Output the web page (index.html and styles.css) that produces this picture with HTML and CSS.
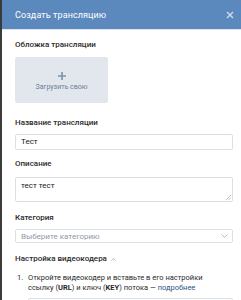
FILE: index.html
```html
<!DOCTYPE html>
<html lang="ru">
<head>
<meta charset="utf-8">
<link rel="stylesheet" href="styles.css">
</head>
<body>
<div class="dialog">
  <div class="header">
    <span class="title">Создать трансляцию</span>
    <svg class="close" width="8" height="8" viewBox="0 0 8 8"><path d="M1 1L7 7M7 1L1 7" stroke="#cfdcec" stroke-width="1.4"/></svg>
  </div>
  <div class="body">
    <div class="label first">Обложка трансляции</div>
    <div class="cover">
      <svg width="8" height="8" viewBox="0 0 8 8"><path d="M4 0V8M0 4H8" stroke="#7e92ab" stroke-width="1.6"/></svg>
      <span>Загрузить свою</span>
    </div>
    <div class="label l2">Название трансляции</div>
    <div class="input">Тест</div>
    <div class="label l3">Описание</div>
    <div class="textarea">тест тест
      <svg class="grip" width="5" height="5" viewBox="0 0 5 5"><path d="M5 0L0 5M5 2.5L2.5 5" stroke="#aab" stroke-width="0.7"/></svg>
    </div>
    <div class="label l4">Категория</div>
    <div class="select"><span>Выберите категорию</span>
      <svg width="7" height="4" viewBox="0 0 7 4"><path d="M0.5 0.5L3.5 3.3L6.5 0.5" fill="none" stroke="#a6b3c2" stroke-width="0.9"/></svg>
    </div>
    <div class="label l5">Настройка видеокодера <svg width="5" height="3" viewBox="0 0 5 3"><path d="M0.5 2.6L2.5 0.6L4.5 2.6" fill="none" stroke="#8fb0d6" stroke-width="0.9"/></svg></div>
    <div class="step">
      <span class="num">1.</span>
      <div class="text">Откройте видеокодер и вставьте в его настройки<br>ссылку (<b>URL</b>) и ключ (<b>KEY</b>) потока — <a>подробнее</a></div>
    </div>
    <div class="urlbox"></div>
  </div>
</div>
</body>
</html>
```
FILE: styles.css
```css
html, body {
  margin: 0;
  padding: 0;
  background: #3b3b3b;
  overflow: hidden;
}
body {
  font-family: Roboto, "Open Sans", sans-serif;
  width: 241px;
  height: 300px;
}
.dialog {
  margin-left: 2px;
  background: #fff;
  height: 300px;
  overflow: hidden;
}
.header {
  height: 29px;
  background: #5b88bd;
  border-bottom: 1px solid #dce5f0;
  display: flex;
  align-items: center;
  justify-content: space-between;
  padding: 0 7px 0 13px;
}
.title {
  color: #fff;
  font-size: 9px;
  letter-spacing: 0.1px;
}
.body {
  padding: 10px 8px 0 13px;
}
.label {
  font-size: 8px;
  line-height: 10px;
  color: #2a2a2a;
  font-weight: 500;
  display: flex;
  align-items: center;
  gap: 4px;
}
.cover {
  margin-top: 7px;
  width: 93px;
  height: 46px;
  background: #e2e7ee;
  border-radius: 2px;
  display: flex;
  flex-direction: column;
  align-items: center;
  justify-content: center;
  gap: 3px;
  padding-top: 2px;
  box-sizing: border-box;
}
.cover span {
  font-size: 7px;
  color: #6d7f96;
}
.l2 { margin-top: 15px; }
.l3 { margin-top: 9px; }
.l4 { margin-top: 11px; }
.l5 { margin-top: 11px; }
.input, .textarea, .select {
  margin-top: 6px;
  border: 1px solid #dbe0e7;
  border-radius: 2px;
  box-sizing: border-box;
  font-size: 8px;
  color: #222;
  padding: 0 5px;
}
.input {
  height: 16px;
  line-height: 14px;
}
.textarea {
  margin-top: 8px;
  height: 25px;
  padding-top: 3px;
  line-height: 10px;
  position: relative;
}
.grip {
  position: absolute;
  right: 1px;
  bottom: 1px;
}
.select {
  height: 14px;
  display: flex;
  align-items: center;
  justify-content: space-between;
  color: #8f99a6;
  padding-right: 4px;
}
.step {
  margin-top: 9px;
  display: flex;
  font-size: 7.5px;
  line-height: 10px;
  color: #2a2a2a;
}
.num {
  width: 11px;
  padding-left: 2px;
  flex: none;
}
.text { white-space: nowrap; }
.text b { font-weight: 700; }
.text a { color: #2a5885; }
.urlbox {
  margin: 5px 0 0 13px;
  height: 20px;
  border: 1px solid #dbe0e7;
  border-radius: 2px;
}
```
